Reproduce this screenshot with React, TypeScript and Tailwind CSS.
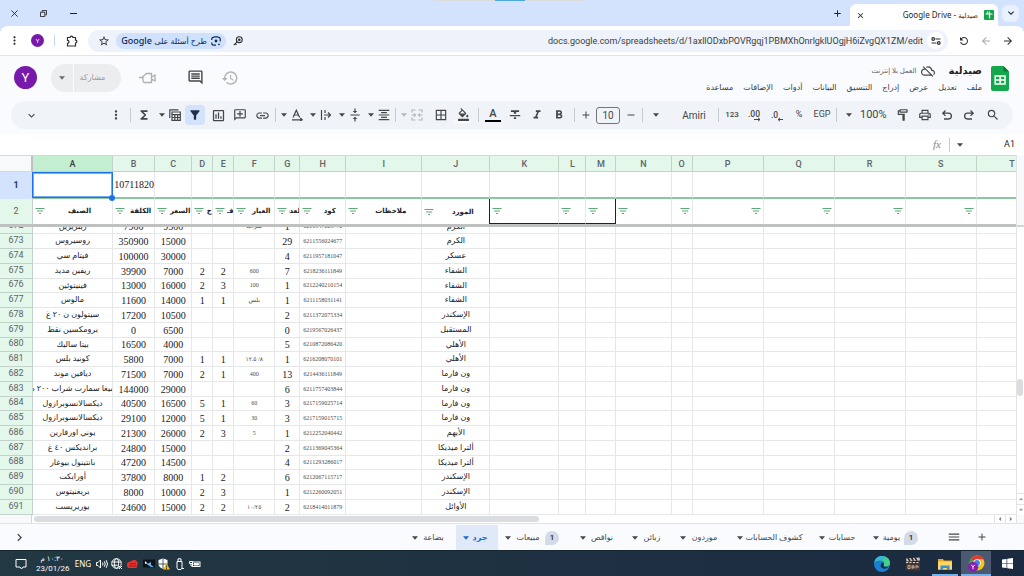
import type { ReactNode } from 'react';
import {
  MdAdd, MdArrowBack, MdArrowForward, MdBorderAll, MdChevronRight, MdClose, MdExpandMore, MdFilterAlt, MdFilterList,
  MdFormatAlignCenter, MdFormatBold, MdFormatColorFill, MdFormatItalic, MdFormatStrikethrough, MdFunctions, MdHistory,
  MdInsertLink, MdMenu, MdMoreVert, MdOutlineAddComment, MdOutlineCloudOff, MdOutlineComment, MdOutlineFormatPaint,
  MdOutlineInsertChart, MdOutlinePrint, MdRefresh, MdRemove, MdSearch, MdStarBorder, MdVerticalAlignCenter,
} from 'react-icons/md';

const UI = "font-['Roboto','DejaVu_Sans',sans-serif]";

/* ---------- small shared pieces ---------- */

function Caret({ className = '' }: { className?: string }) {
  return (
    <svg viewBox="0 0 6 4" className={`h-1 w-[6px] shrink-0 ${className}`} fill="currentColor" aria-hidden="true">
      <path d="M0 0.300h6L3 3.700z" />
    </svg>
  );
}

function IconButton({ label, className = 'w-[22px]', children }: { label: string; className?: string; children: ReactNode }) {
  return (
    <button type="button" aria-label={label} className={`flex h-5 shrink-0 items-center justify-center ${className}`}>
      {children}
    </button>
  );
}

function Divider({ className = 'w-1' }: { className?: string }) {
  return (
    <span className={`flex h-[14px] shrink-0 justify-center ${className}`}>
      <span className="w-px bg-[#c7cacd]" />
    </span>
  );
}

function CaretGroup({ label, children, className = '' }: { label: string; children: ReactNode; className?: string }) {
  return (
    <button type="button" aria-label={label} className={`flex h-5 shrink-0 items-center pl-[3px] ${className}`}>
      <span className="flex w-2 justify-center"><Caret /></span>
      <span className="flex w-[18px] justify-center">{children}</span>
    </button>
  );
}

function SheetsLogo({ className }: { className: string }) {
  return (
    <svg viewBox="0 0 18 25" className={className} aria-hidden="true">
      <path d="M2 0h10.500l5.500 5.500V23a2 2 0 0 1-2 2H2a2 2 0 0 1-2-2V2a2 2 0 0 1 2-2z" fill="#12a84b" />
      <path d="M12.500 0l5.500 5.500h-5.500z" fill="#0b7a36" />
      <path d="M4.200 10h9.800v8H4.200zM4.200 14h9.800M9.100 10v8" fill="none" stroke="#fff" strokeWidth="1.500" />
    </svg>
  );
}

/* ---------- browser window ---------- */

function TabStrip() {
  return (
    <div className="flex h-[26px] items-center bg-[#d3e2fd] text-[#1f1f1f]">
      <IconButton label="إغلاق" className="ml-[3px] w-[22px]">
        <svg viewBox="0 0 8 8" className="size-[7px]" stroke="currentColor"><path d="M.5.5l7 7M7.500.5l-7 7" /></svg>
      </IconButton>
      <IconButton label="استعادة" className="ml-[7px] w-[22px]">
        <svg viewBox="0 0 8 8" className="size-[7px]" stroke="currentColor" fill="none"><path d="M.5 2.500h5v5h-5zM2.500 2V.5h5v5H6" /></svg>
      </IconButton>
      <IconButton label="تصغير" className="ml-2 w-[22px]">
        <span className="h-px w-[7px] bg-[#1f1f1f]" />
      </IconButton>
      <div className="flex h-px flex-1 self-start">
        <div className="ml-auto mr-60 flex w-[152px] justify-center bg-[#dcdcdc]">
          <div className="w-[30px] bg-[#4da6e0]" />
        </div>
      </div>
      <IconButton label="علامة تبويب جديدة" className="mr-0.5 w-[22px]"><MdAdd size={11} /></IconButton>
      <div className="flex h-[22px] w-[148px] items-center self-end rounded-t-md bg-white px-1">
        <button type="button" aria-label="إغلاق علامة التبويب" className="flex w-3 justify-center"><MdClose size={9} /></button>
        <span className="flex-1 pr-[6px] text-right font-['Noto_Sans','DejaVu_Sans',sans-serif] text-[8px] leading-4">
          Google Drive - <span className="font-['DejaVu_Sans',sans-serif] text-[7px]">صيدلية</span>
        </span>
        <svg viewBox="0 0 10 10" className="size-[10px]" aria-hidden="true">
          <rect width="10" height="10" rx="1" fill="#12a34a" />
          <path d="M1.500 4h7M5.500 1.500v7M3.500 4V1.500" stroke="#fff" strokeWidth="1.200" fill="none" />
        </svg>
      </div>
      <button type="button" aria-label="البحث في علامات التبويب" className="ml-1 mr-[5px] flex size-[17px] items-center justify-center rounded-md bg-[#e9f0fe]">
        <MdExpandMore size={12} />
      </button>
    </div>
  );
}

function AddressRow() {
  return (
    <div className="bg-[#d3e2fd]">
      <div className="flex h-[30px] items-center rounded-t-lg border-b border-[#e3e5e8] bg-white text-[#2d2f31]">
        <IconButton label="المزيد" className="ml-[3px] w-[22px]"><MdMoreVert size={13} /></IconButton>
        <button type="button" aria-label="الملف الشخصي" className={`ml-[6px] flex size-[13px] items-center justify-center rounded-full bg-[#7719aa] text-[6px] text-white ${UI}`}>Y</button>
        <span className="ml-[10px] h-[11px] w-px bg-[#c6dafc]" />
        <IconButton label="الإضافات" className="ml-[6px] w-[22px]">
          <svg viewBox="0 0 12 12" className="size-3" fill="none" stroke="currentColor" strokeWidth="1.200">
            <path d="M1.500 2.500h2.600a1.400 1.400 0 0 1 2.800 0h2.600v2.700a1.400 1.400 0 0 1 0 2.800v3h-8V8.300a1.500 1.500 0 0 0 0-3z" />
          </svg>
        </IconButton>
        <div className="mx-[5px] flex h-[22px] flex-1 items-center rounded-full bg-[#edf2fb] pr-[2px]">
          <IconButton label="إضافة إشارة" className="ml-1 w-6"><MdStarBorder size={12} /></IconButton>
          <button type="button" className="flex h-4 w-[110px] items-center justify-center gap-1 rounded-full bg-[#d0e1fd] font-['Noto_Sans','DejaVu_Sans',sans-serif] text-[9px] font-medium text-[#0b2a57]" dir="rtl">
            <svg viewBox="0 0 10 10" className="size-[10px]" fill="none" stroke="currentColor" strokeWidth="1.200" aria-hidden="true">
              <path d="M.8 6.500v1a1.700 1.700 0 0 0 1.700 1.700H5M.8 4V3A1.700 1.700 0 0 1 2.500 1.300l.8-.5h3.400l.8.5A1.700 1.700 0 0 1 9.200 3v2.500" />
              <circle cx="5" cy="5" r="1.400" fill="currentColor" stroke="none" /><circle cx="8" cy="8.300" r=".9" fill="currentColor" stroke="none" />
            </svg>
            <span className="whitespace-nowrap"><span className="text-[8px]">طرح أسئلة على</span> Google</span>
          </button>
          <IconButton label="كلمات المرور" className="w-6">
            <svg viewBox="0 0 10 10" className="size-[10px]" fill="none" stroke="currentColor" strokeWidth="1.100">
              <circle cx="6.300" cy="3.700" r="2.900" /><circle cx="6.300" cy="3.700" r=".7" fill="currentColor" /><path d="M4.200 5.800L.8 9.200M2.200 7.700l1.300 1.200" />
            </svg>
          </IconButton>
          <input
            dir="ltr"
            aria-label="شريط العناوين"
            className="h-5 min-w-0 flex-1 bg-transparent pr-1 text-right font-['Roboto',sans-serif] text-[9px] text-[#3c4043] outline-none"
            defaultValue="docs.google.com/spreadsheets/d/1axllODxbPOVRgqj1PBMXhOnrlgklUOgjH6iZvgQX1ZM/edit"
          />
          <button type="button" aria-label="معلومات الموقع" className="mr-[2px] flex size-[17px] items-center justify-center rounded-full bg-white">
            <svg viewBox="0 0 10 8" className="h-2 w-[10px]" fill="none" stroke="currentColor" strokeWidth="1.200" aria-hidden="true">
              <path d="M4.500 2H9.500M.5 6H5.500" /><circle cx="2.200" cy="2" r="1.300" /><circle cx="7.800" cy="6" r="1.300" />
            </svg>
          </button>
        </div>
        <IconButton label="إعادة التحميل"><MdRefresh size={12} className="-scale-x-100" /></IconButton>
        <IconButton label="للأمام" className="w-[22px] text-[#a3a7ab]"><MdArrowBack size={12} /></IconButton>
        <IconButton label="للخلف" className="mr-[5px] w-[22px]"><MdArrowForward size={12} /></IconButton>
      </div>
    </div>
  );
}

/* ---------- document header ---------- */

const MENUS = ['ملف', 'تعديل', 'عرض', 'إدراج', 'التنسيق', 'البيانات', 'أدوات', 'الإضافات', 'مساعدة'];

function DocHeader() {
  return (
    <header className={`flex h-[45px] items-center justify-between bg-[#fafbff] ${UI}`}>
      <div className="flex items-center pb-[2px] pl-[14px]">
        <button type="button" aria-label="حساب Google" className="flex size-[23px] items-center justify-center rounded-full bg-[#7719aa] text-[13px] text-white">Y</button>
        <div className="ml-[14px] flex h-7 w-[70px] items-center rounded-full bg-[#ecedee] text-[8px] text-[#9a9c9e]">
          <button type="button" aria-label="خيارات المشاركة" className="flex h-full w-[23px] items-center justify-center border-r border-[#fafbff] text-[#6b6d6f]"><Caret /></button>
          <button type="button" className="flex-1 pr-[10px] text-center">مشاركة</button>
        </div>
        <IconButton label="الانضمام إلى مكالمة" className="ml-[11px] w-[30px] text-[#adb0b3]">
          <svg viewBox="0 0 18 14" className="h-[14px] w-[18px]" fill="none" stroke="currentColor" strokeWidth="1.300">
            <path d="M1 6.500h4M8.500 2.500h5v9h-7A1.500 1.500 0 0 1 5 10V5.500zM17 4v6l-3.500-2V6z" />
          </svg>
        </IconButton>
        <IconButton label="التعليقات" className="ml-[18px] w-[30px] text-[#444647]"><MdOutlineComment size={17} /></IconButton>
        <IconButton label="سجل الإصدارات" className="ml-[5px] w-[30px] text-[#b0b3b6]"><MdHistory size={18} /></IconButton>
      </div>
      <div className="flex items-center gap-2 pr-[15px]">
        <div className="flex flex-col pt-px" dir="rtl">
          <div className="flex h-[18px] items-center pr-px">
            <h1 className="text-[10px] font-bold leading-4 text-[#1f1f1f]">صيدلية</h1>
            <MdOutlineCloudOff size={14} className="mr-[14px] text-[#444746]" />
            <span className="mr-1 text-[7px] text-[#5f6368]">العمل بلا إنترنت</span>
          </div>
          <nav className="flex h-4 items-center gap-[10px] pr-px text-[8px] text-[#3c4043]">
            {MENUS.map((m) => <button type="button" key={m}>{m}</button>)}
          </nav>
        </div>
        <SheetsLogo className="h-[25px] w-[18px]" />
      </div>
    </header>
  );
}

function Toolbar() {
  return (
    <div className="bg-[#fafbff] pb-[5px]">
      <div className={`mx-[11px] flex h-7 items-center rounded-full bg-[#f0f4f9] pl-[9px] pr-[7px] text-[#444746] ${UI}`}>
        <IconButton label="إخفاء القوائم"><MdExpandMore size={13} /></IconButton>
        <span className="flex-1" />
        <IconButton label="المزيد"><MdMoreVert size={14} /></IconButton>
        <Divider className="w-[6px]" />
        <IconButton label="الدوال"><MdFunctions size={14} /></IconButton>
        <CaretGroup label="طرق عرض الجدول">
          <svg viewBox="0 0 12 12" className="size-3" fill="none" stroke="currentColor" strokeWidth="1.200">
            <path d="M.8 9V.8H9.500M3 3h8.300v8.300H3zM3 5.600h8.300M3 8.500h8.300M5.800 5.600v5.700M8.600 5.600v5.700" />
          </svg>
        </CaretGroup>
        <IconButton label="فلتر" className="ml-px mr-[2px] w-5 rounded-sm bg-[#d3e3fd] text-[#1f2f4a]"><MdFilterAlt size={14} /></IconButton>
        <IconButton label="رسم بياني"><MdOutlineInsertChart size={15} /></IconButton>
        <IconButton label="تعليق"><MdOutlineAddComment size={14} className="-scale-x-100" /></IconButton>
        <IconButton label="رابط"><MdInsertLink size={15} /></IconButton>
        <Divider />
        <CaretGroup label="تدوير النص">
          <svg viewBox="0 0 12 12" className="size-3" fill="none" stroke="currentColor" strokeWidth="1.200">
            <path d="M2 8.500L5.300 1.200 8.600 8.500M3.200 6h4.200M1 10.800h10M9.300 9l1.800 1.800L9.300 12" />
          </svg>
        </CaretGroup>
        <CaretGroup label="التفاف النص">
          <svg viewBox="0 0 12 12" className="size-3" fill="none" stroke="currentColor" strokeWidth="1.200">
            <path d="M1.500 1v10M5 1v3M5 8v3M4 6h6.500M8 3.500L10.500 6 8 8.500" />
          </svg>
        </CaretGroup>
        <CaretGroup label="محاذاة عمودية"><MdVerticalAlignCenter size={14} /></CaretGroup>
        <CaretGroup label="محاذاة أفقية"><MdFormatAlignCenter size={14} /></CaretGroup>
        <Divider />
        <CaretGroup label="دمج الخلايا" className="text-[#b4b7ba]">
          <svg viewBox="0 0 12 12" className="size-3" fill="none" stroke="currentColor" strokeWidth="1.200">
            <path d="M4.500 1H1v2.500M7.500 1H11v2.500M4.500 11H1V8.500M7.500 11H11V8.500M.5 6H4.500M3 4.500L4.500 6 3 7.500M11.500 6H7.500M9 4.500L7.500 6 9 7.500" />
          </svg>
        </CaretGroup>
        <IconButton label="الحدود" className="ml-1 w-[22px]"><MdBorderAll size={14} /></IconButton>
        <IconButton label="لون التعبئة" className="w-[22px] flex-col"><MdFormatColorFill size={13} /><span className="h-[2px] w-4 bg-white" /></IconButton>
        <Divider className="w-2" />
        <IconButton label="لون النص" className="w-[22px] flex-col">
          <span className="text-[11px] font-medium leading-3">A</span><span className="h-[2px] w-4 bg-black" />
        </IconButton>
        <IconButton label="يتوسطه خط"><MdFormatStrikethrough size={14} /></IconButton>
        <IconButton label="مائل"><MdFormatItalic size={14} /></IconButton>
        <IconButton label="غامق"><MdFormatBold size={14} /></IconButton>
        <Divider className="w-2" />
        <IconButton label="تكبير الخط" className="w-4"><MdAdd size={12} /></IconButton>
        <input aria-label="حجم الخط" defaultValue="10" className="mx-[2px] h-[17px] w-6 rounded-[3px] border border-[#747775] bg-transparent text-center text-[10px]" />
        <IconButton label="تصغير الخط" className="w-[18px]"><MdRemove size={12} /></IconButton>
        <Divider />
        <IconButton label="قائمة الخطوط" className="w-6"><Caret /></IconButton>
        <button type="button" className="w-12 pl-1 text-center text-[10px]">Amiri</button>
        <Divider />
        <button type="button" className="w-6 text-center text-[8px] font-medium">123</button>
        <IconButton label="زيادة المنازل العشرية">
          <svg viewBox="0 0 14 13" className="h-[13px] w-[14px]" fill="currentColor">
            <text x="0" y="7.500" fontSize="8.500" fontWeight="500" fontFamily="Roboto">.00</text>
            <path d="M6 10.500h6M10 8.800l2 1.700-2 1.700" fill="none" stroke="currentColor" />
          </svg>
        </IconButton>
        <IconButton label="تقليل المنازل العشرية">
          <svg viewBox="0 0 14 13" className="h-[13px] w-[14px]" fill="currentColor">
            <text x="1" y="8.500" fontSize="8.500" fontWeight="500" fontFamily="Roboto">.0</text>
            <path d="M13 10.500H8M10 8.800l-2 1.700 2 1.700" fill="none" stroke="currentColor" />
          </svg>
        </IconButton>
        <button type="button" className="w-[22px] text-center text-[9px]">%</button>
        <button type="button" className="w-6 text-center text-[9px]">EGP</button>
        <Divider />
        <IconButton label="قائمة التكبير"><Caret /></IconButton>
        <button type="button" className="w-8 text-left text-[11px]">100%</button>
        <IconButton label="نسخ التنسيق"><MdOutlineFormatPaint size={14} className="-scale-x-100" /></IconButton>
        <IconButton label="طباعة"><MdOutlinePrint size={14} /></IconButton>
        <IconButton label="إعادة">
          <svg viewBox="0 0 12 12" className="size-3" fill="none" stroke="currentColor" strokeWidth="1.300"><path d="M4.500 1.500L1.800 4.200l2.700 2.700M1.800 4.200h5.700a2.900 2.900 0 0 1 0 5.800H3" /></svg>
        </IconButton>
        <IconButton label="تراجع">
          <svg viewBox="0 0 12 12" className="size-3" fill="none" stroke="currentColor" strokeWidth="1.300"><path d="M7.500 1.500l2.700 2.700-2.700 2.700M10.200 4.200H4.500a2.900 2.900 0 0 0 0 5.800H9" /></svg>
        </IconButton>
        <IconButton label="بحث" className="w-[26px]"><MdSearch size={14} /></IconButton>
      </div>
    </div>
  );
}

function FormulaBar() {
  return (
    <div className={`flex h-[21px] items-center bg-white text-[#444746] ${UI}`}>
      <input aria-label="شريط الصيغة" className="h-4 min-w-0 flex-1 outline-none" />
      <span className="w-5 text-center font-['Liberation_Serif',serif] text-[11px] italic text-[#80868b]">fx</span>
      <Divider />
      <IconButton label="النطاقات المسماة" className="w-[18px]"><Caret /></IconButton>
      <input aria-label="مربع الاسم" defaultValue="A1" className="w-[55px] pr-[9px] text-right text-[9px] text-[#1f1f1f] outline-none" />
    </div>
  );
}

/* ---------- grid ---------- */

const COLS: { id: string; w: string; label?: string; flip?: boolean; none?: boolean }[] = [
  { id: 'A', w: 'w-20', label: 'الصنف' },
  { id: 'B', w: 'w-[42px]', label: 'الكلفة' },
  { id: 'C', w: 'w-[37px]', label: 'السعر' },
  { id: 'D', w: 'w-[21px]', label: 'خ' },
  { id: 'E', w: 'w-[21px]', label: 'فـ' },
  { id: 'F', w: 'w-[41px]', label: 'العيار' },
  { id: 'G', w: 'w-[25px]', label: 'العدد' },
  { id: 'H', w: 'w-[46px]', label: 'كود' },
  { id: 'I', w: 'w-[76px]', label: 'ملاحظات' },
  { id: 'J', w: 'w-[68px]', label: 'المورد' },
  { id: 'K', w: 'w-[69px]' },
  { id: 'L', w: 'w-[27px]' },
  { id: 'M', w: 'w-[30px]' },
  { id: 'N', w: 'w-[55px]' },
  { id: 'O', w: 'w-[21px]', flip: true },
  { id: 'P', w: 'w-[71px]', flip: true },
  { id: 'Q', w: 'w-[71px]', flip: true },
  { id: 'R', w: 'w-[71px]', flip: true },
  { id: 'S', w: 'w-[71px]', flip: true },
  { id: 'T', w: 'w-[71px]', none: true },
];

/* row number, then the values of columns A to J */
const ROWS: string[][] = [
  ['673', 'روسيروس', '350900', '15000', '', '', '', '29', '6211556024677', '', 'الكرم'],
  ['674', 'فيتام سي', '100000', '30000', '', '', '', '4', '6211957181047', '', 'عسكر'],
  ['675', 'ريفين مديد', '39900', '7000', '2', '2', '600', '7', '6218236111849', '', 'الشفاء'],
  ['676', 'فينيتوئين', '13000', '16000', '2', '3', '100', '1', '6212240210154', '', 'الشفاء'],
  ['677', 'مالوس', '11600', '14000', '1', '1', 'بلس', '1', '6211158031141', '', 'الشفاء'],
  ['678', 'سيتولون ن ٢٠ غ', '17200', '10500', '', '', '', '2', '6211372075334', '', 'الإسكندر'],
  ['679', 'برومكسين نقط', '0', '6500', '', '', '', '0', '6219567026437', '', 'المستقبل'],
  ['680', 'بيتا ساليك', '16500', '4000', '', '', '', '5', '6210872086420', '', 'الأهلي'],
  ['681', 'كونيد بلس', '5800', '7000', '1', '1', '٨/ ١٢.٥', '1', '6216208070101', '', 'الأهلي'],
  ['682', 'ديافين موند', '71500', '7000', '2', '1', '400', '13', '6214436111849', '', 'ون فارما'],
  ['683', 'أوميغا سمارت شراب ٢٠٠ مل', '144000', '29000', '', '', '', '6', '6211757403844', '', 'ون فارما'],
  ['684', 'ديكسالانسوبرازول', '40500', '16500', '5', '1', '60', '3', '6217159025714', '', 'ون فارما'],
  ['685', 'ديكسالانسوبرازول', '29100', '12000', '5', '1', '30', '3', '6217159015715', '', 'ون فارما'],
  ['686', 'يوني اورفارين', '21300', '26000', '2', '3', '5', '1', '6212252040442', '', 'الأيهم'],
  ['687', 'برانديكس ٤٠ غ', '24800', '15000', '', '', '', '2', '6211369045364', '', 'ألترا ميديكا'],
  ['688', 'بانتينول بيوغار', '47200', '14500', '', '', '', '4', '6211293286017', '', 'ألترا ميديكا'],
  ['689', 'أورابكت', '37800', '8000', '1', '2', '', '6', '6212067115717', '', 'الإسكندر'],
  ['690', 'بريغنيتوس', '8000', '10000', '2', '3', '', '1', '6212260092051', '', 'الإسكندر'],
  ['691', 'يوريريست', '24600', '15000', '2', '2', '١٠/٢٥', '2', '6218414011879', '', 'الأوائل'],
];
const CUT_ROW = ['672', 'ريتريزين', '7900', '9500', '', '', 'شراب', '1', '6211547025772', '', 'الكرم'];

function cellText(col: number) {
  if (col === 5 || col === 7) return 'text-[6px] text-[#4a4d50]';
  if (col === 0 || col === 9) return 'text-[8px]';
  return 'text-[10px]';
}

function Cell({ col, value }: { col: number; value: string }) {
  return (
    <div className="flex h-[13px] items-center justify-center overflow-hidden whitespace-nowrap" dir={col === 5 ? 'ltr' : 'auto'}>
      <span className={cellText(col)}>{value}</span>
    </div>
  );
}

function FilterButton({ col }: { col: string }) {
  return (
    <button type="button" aria-label={`فلتر ${col}`} className="flex w-[14px] shrink-0 justify-center text-[#5fa778]">
      <MdFilterList size={12} />
    </button>
  );
}

function rowTwoBorder(id: string) {
  if (id === 'J') return 'border-r border-[#202124]';
  if (id === 'K' || id === 'L') return 'border-r border-b border-b-[#202124] border-r-[#e6e7e8]';
  if (id === 'M') return 'border-r border-b border-[#202124]';
  return 'border-r border-b border-b-white border-r-[#e6e7e8]';
}

function Grid() {
  return (
    <div className="flex">
      <div className="min-w-0 flex-1 overflow-hidden border-t border-[#d5d8da]">
        <table className="w-[1048px] table-fixed border-separate border-spacing-0 text-[#202124] font-['Liberation_Serif','DejaVu_Sans',serif]">
          <colgroup>
            <col className="w-[33px]" />
            {COLS.map((c) => <col key={c.id} className={c.w} />)}
          </colgroup>
          <thead className="text-[9px] leading-3 text-[#5f6368] font-['Roboto','DejaVu_Sans',sans-serif]">
            <tr className="h-4">
              <th className="border-b border-r-2 border-b-[#d5d8da] border-r-[#bfc1c1] bg-[#f8f9fa] p-0" />
              {COLS.map((c) => (
                <th key={c.id} scope="col" className={`border-b border-r border-[#c4d3c9] p-0 font-medium ${c.id === 'A' ? 'bg-[#c3eecf] text-[#3c4043]' : 'bg-[#e4f7eb]'}`}>{c.id}</th>
              ))}
            </tr>
          </thead>
          <tbody>
            <tr className="h-[27px]">
              <th scope="row" className="border-r border-[#c4d3c9] bg-[#d3e3fd] p-0 text-[9px] font-bold text-[#1f3a68] font-['Roboto',sans-serif]">1</th>
              {COLS.map((c) => (
                <td key={c.id} className="relative border-b-2 border-r border-b-[#8cc79f] border-r-[#e6e7e8] p-0 text-center text-[10px]">
                  {c.id === 'A' && (
                    <>
                      <span className="absolute -bottom-px -left-px -right-px top-0 border border-[#1a73e8] ring-1 ring-inset ring-[#1a73e8]/60" />
                      <span className="absolute -bottom-[4px] -right-[3px] z-10 size-[6px] rounded-full bg-[#1a73e8]" />
                    </>
                  )}
                  {c.id === 'B' && <div className="pl-px leading-3">10711820</div>}
                </td>
              ))}
            </tr>
            <tr className="h-[25px]">
              <th scope="row" className="border-r border-[#c4d3c9] bg-[#e4f7eb] p-0 text-[9px] font-normal text-[#5f6368] font-['Roboto',sans-serif]">2</th>
              {COLS.map((c) => (
                <td key={c.id} className={`p-0 ${rowTwoBorder(c.id)}`}>
                  <div className="flex h-6 items-center overflow-hidden">
                    {!c.none && !c.flip && <FilterButton col={c.id} />}
                    <span className="flex min-w-0 flex-1 justify-center overflow-hidden whitespace-nowrap text-[7px] font-bold leading-4" dir="rtl">{c.label}</span>
                    {c.flip && <FilterButton col={c.id} />}
                  </div>
                </td>
              ))}
            </tr>
            <tr className="h-[3px]"><td colSpan={21} className="bg-[#bfc1c1] p-0" /></tr>
            <tr className="h-[7px]">
              {CUT_ROW.map((v, i) => i === 0 ? (
                <th key={i} scope="row" className="border-b border-r border-[#c4d3c9] bg-[#e4f7eb] p-0 font-normal">
                  <div className="flex h-[6px] items-end justify-center overflow-hidden pb-[3px] text-[9px] leading-[9px] text-[#5f6368] font-['Roboto',sans-serif]">{v}</div>
                </th>
              ) : (
                <td key={i} className="border-b border-r border-[#e6e7e8] p-0">
                  <div className="flex h-[6px] items-end overflow-hidden"><div className="w-full"><Cell col={i - 1} value={v} /></div></div>
                </td>
              ))}
              {COLS.slice(10).map((c) => <td key={c.id} className="border-b border-r border-[#e6e7e8] p-0" />)}
            </tr>
            {ROWS.map((r, n) => (
              <tr key={r[0]} className={n % 4 === 3 ? 'h-[14px]' : 'h-[15px]'}>
                <th scope="row" className="border-b border-r border-[#c4d3c9] bg-[#e4f7eb] p-0 pb-[2px] text-[9px] font-normal leading-[11px] text-[#5f6368] font-['Roboto',sans-serif]">{r[0]}</th>
                {r.slice(1).map((v, i) => (
                  <td key={i} className="border-b border-r border-[#e6e7e8] p-0"><Cell col={i} value={v} /></td>
                ))}
                {COLS.slice(10).map((c) => <td key={c.id} className="border-b border-r border-[#e6e7e8] p-0" />)}
              </tr>
            ))}
          </tbody>
        </table>
      </div>
      <div className="flex w-2 flex-col border-l border-[#e1e3e5] bg-white">
        <div className="h-[72px] border-b-2 border-[#d0d4da] bg-[#f8f9fa]" />
        <div className="mt-[152px] h-[17px] w-[6px] rounded-full bg-[#dadce0]" />
        <div className="mt-auto flex h-[11px] items-center justify-center border-t border-[#e1e3e5]"><Caret className="rotate-180 scale-75 text-[#9aa0a6]" /></div>
        <div className="flex h-[11px] items-center justify-center border-t border-[#e1e3e5]"><Caret className="scale-75 text-[#9aa0a6]" /></div>
      </div>
    </div>
  );
}

function HorizontalScroll() {
  return (
    <div className="flex h-[9px] items-center border-b border-[#e1e3e5] bg-white">
      <div className="h-full w-8 border-r border-[#d5d8da] bg-[#f8f9fa]" />
      <div className="flex h-full flex-1 items-center pl-[2px]">
        <div className="h-[6px] w-[505px] rounded-full bg-[#dadce0]" />
      </div>
      <div className="flex h-full w-[11px] items-center justify-center border-l border-[#e1e3e5]"><Caret className="rotate-90 scale-75 text-[#80868b]" /></div>
      <div className="flex h-full w-[11px] items-center justify-center border-l border-[#e1e3e5]"><Caret className="-rotate-90 scale-75 text-[#80868b]" /></div>
      <div className="h-full w-2 border-l border-[#e1e3e5] bg-[#f8f9fa]" />
    </div>
  );
}

/* ---------- sheet tabs ---------- */

const SHEETS = [
  { name: 'بضاعة', w: 'w-[51px]' },
  { name: 'جرد', w: 'w-[42px]', active: true },
  { name: 'مبيعات', w: 'w-[75px]', badge: true },
  { name: 'نواقص', w: 'w-[52px]' },
  { name: 'زبائن', w: 'w-[48px]' },
  { name: 'موردون', w: 'w-[57px]' },
  { name: 'كشوف الحسابات', w: 'w-[82px]' },
  { name: 'حسابات', w: 'w-[54px]' },
  { name: 'يومية', w: 'w-[66px]', badge: true },
];

function SheetTabs() {
  return (
    <nav className={`flex h-[26px] items-center bg-[#f9fbff] text-[#444746] ${UI}`}>
      <IconButton label="تمرير" className="ml-2 w-[22px]"><MdChevronRight size={15} /></IconButton>
      <span className="flex-1" />
      {SHEETS.map((s) => (
        <button
          type="button"
          key={s.name}
          className={`flex h-[25px] shrink-0 items-center whitespace-nowrap pl-[7px] pt-px text-[8px] ${s.w} ${s.badge ? 'pr-[14px]' : 'pr-[7px]'} ${s.active ? 'bg-[#e0e9f8] font-bold text-[#1967d2]' : ''}`}
        >
          <Caret />
          <span className="flex-1 pt-px text-center">{s.name}</span>
          {s.badge && <span className="flex size-[14px] items-center justify-center rounded-full rounded-bl-none bg-[#d3dbe8] font-medium text-[#1f1f1f]">1</span>}
        </button>
      ))}
      <IconButton label="كل الأوراق" className="ml-2 w-7"><MdMenu size={14} /></IconButton>
      <IconButton label="إضافة ورقة" className="mr-7 w-7"><MdAdd size={12} /></IconButton>
    </nav>
  );
}

/* ---------- task bar ---------- */

function TaskBar() {
  return (
    <footer className="flex h-[26px] items-center border-t border-[#16262f] bg-linear-to-r from-[#223842] to-[#1b2a40] font-['Noto_Sans','DejaVu_Sans',sans-serif] text-white">
      <IconButton label="الإشعارات" className="ml-[10px] w-[22px]">
        <svg viewBox="0 0 12 12" className="size-3" fill="none" stroke="currentColor"><path d="M1 1.500h10v7.500H8L6.500 11 5 9H1z" /></svg>
      </IconButton>
      <button type="button" className="ml-1 w-[32px] text-center font-['Roboto','DejaVu_Sans',sans-serif] text-[8px] leading-[10px]">
        <span className="block text-[7px]" dir="rtl">١٠:٣٠ م</span>
        <span className="block">23/01/26</span>
      </button>
      <button type="button" className="ml-[6px] w-[18px] text-[8px]">ENG</button>
      <IconButton label="الصوت" className="ml-[2px] w-[15px]">
        <svg viewBox="0 0 12 10" className="h-[10px] w-3" fill="none" stroke="currentColor"><path d="M.5 3.500H2L4.500 1v8L2 6.500H.5zM6.500 3.500q1 1.500 0 3M8.300 2.300q2 2.700 0 5.400M10.200 1.200q2.600 3.800 0 7.600" /></svg>
      </IconButton>
      <IconButton label="الشبكة" className="w-4">
        <svg viewBox="0 0 12 12" className="size-3" fill="none" stroke="currentColor"><circle cx="5.500" cy="5.500" r="4.800" /><ellipse cx="5.500" cy="5.500" rx="2.100" ry="4.800" /><path d="M.7 4h9.600M.7 7.200h6M8 8l3 3M11 8l-3 3" /></svg>
      </IconButton>
      <IconButton label="تطبيق" className="w-4">
        <svg viewBox="0 0 12 10" className="h-[10px] w-3"><path d="M0 5q.5-2.500 3.500-2.500Q5 .5 8 1q3 .8 2.800 3.500L9.500 9H1q-1.300-2-1-4z" fill="#e5322d" /><path d="M2.500 4.800h6.500M2 7h7" stroke="#8f1512" strokeWidth=".8" /></svg>
      </IconButton>
      <IconButton label="الرسومات" className="w-[15px]">
        <svg viewBox="0 0 12 10" className="h-[10px] w-3"><rect width="12" height="8" y="0.500" fill="#0c1218" /><path d="M1 3l4 1.500L8 3v3l3 2H8L5 6z" fill="#63b3ed" /><path d="M2 2l2 2-2 1z" fill="#fff" /></svg>
      </IconButton>
      <IconButton label="الأمان" className="w-4">
        <svg viewBox="0 0 12 12" className="size-3"><path d="M5 .5l4.500 1.500v4q0 3-4.500 5Q.5 9 .5 6V2z" fill="#fff" /><path d="M5 1v5H.5M5 6v5M5 6h4.500" stroke="#223842" fill="none" strokeWidth=".8" /><path d="M8.500 5.500l3.500 6H5z" fill="#fbbc04" /><path d="M8.500 7.500v2M8.500 10v1" stroke="#222" strokeWidth=".8" /></svg>
      </IconButton>
      <IconButton label="USB" className="w-[15px]">
        <svg viewBox="0 0 10 12" className="h-3 w-[10px]" fill="none" stroke="currentColor"><path d="M3 .8h3v2.700H3zM2 3.500h5V10L6 11.500H3L2 10zM7 10.500h2" /></svg>
      </IconButton>
      <IconButton label="البطارية" className="w-4">
        <svg viewBox="0 0 12 10" className="h-[10px] w-3" fill="none" stroke="currentColor"><rect x="3.500" y="3" width="7.500" height="4.500" /><path d="M5 4.500h4.500v1.500H5z" fill="currentColor" /><path d="M.5 2.500h3v2h-3zM2 5v2h2" /></svg>
      </IconButton>
      <span className="flex-1" />
      <button type="button" aria-label="Microsoft Edge" className="flex h-full w-[30px] items-center justify-center">
        <svg viewBox="0 0 16 16" className="size-4">
          <circle cx="8" cy="8" r="8" fill="#1b7fd4" />
          <path d="M.3 6.500C1.200 2.700 4.200 0 8 0c4.600 0 8 3.200 8 6.800 0 2.600-2 3.900-4 3.900-1.500 0-2.600-.6-2.600-1.200 0-.5.7-.8.7-2C10.100 6 8.600 4.300 6 4.300 3.200 4.300 1.200 5.200.3 6.500z" fill="#45cf8c" />
          <path d="M.3 6.500C1.200 2.700 4.200 0 8 0c1.500 0 2.500.3 3.500 1L8 4.800C7.400 4.500 6.800 4.300 6 4.300 3.200 4.300 1.200 5.200.3 6.500z" fill="#35b6d8" />
          <path d="M9.300 6.600c.9.900.9 1.900.2 2.800-.3.900 1.300 1.600 3 1.400 1-.1 1.800-.5 2.500-1-1.500 3.500-5.500 3.700-7.400 2C5.700 10 7 7 9.300 6.600z" fill="#1b2d40" />
        </svg>
      </button>
      <button type="button" aria-label="تشغيل الوسائط" className="flex h-full w-8 items-center justify-center">
        <svg viewBox="0 0 16 14" className="h-[14px] w-4">
          <path d="M1 1.500L14.500.5l.5 3L1.500 4.500z" fill="#cfcac4" /><path d="M3 1.300l2 2.800M6.500 1l2 2.800M10 .8l2 2.800" stroke="#222" strokeWidth="1.500" />
          <rect x="1" y="5" width="14" height="8.500" fill="#47352e" /><path d="M1 5.500h14" stroke="#ddd" strokeDasharray="2 1.500" /><path d="M3 8.500h2v3H3zM7 8.500v3M7 9h2v2H7M11 8.500v3M11 9h2v2" stroke="#d6cfca" fill="none" strokeWidth=".8" />
        </svg>
      </button>
      <button type="button" aria-label="مستكشف الملفات" className="mx-[3px] flex h-full w-[26px] items-center justify-center border-b-2 border-[#76b0e8] pt-[2px]">
        <svg viewBox="0 0 14 12" className="h-3 w-[14px]"><path d="M0 1h5l1 1.500h8V12H0z" fill="#e9a820" /><path d="M0 3.500h14V11H0z" fill="#ffd765" /><path d="M2.500 12V7.500h9V12H9V10H5v2z" fill="#3d8fd9" /></svg>
      </button>
      <button type="button" aria-label="Google Chrome" className="flex h-full w-[30px] items-center justify-center border-b-2 border-[#76b0e8] bg-[#4b5a70]">
        <svg viewBox="0 0 18 18" className="size-[18px]">
          <circle cx="10" cy="9" r="7.500" fill="#fbc116" />
          <path d="M10 9L3.500 5.300A7.500 7.500 0 0 1 16.500 5.300H10z" fill="#e33b2e" />
          <path d="M10 9L3.500 5.300A7.500 7.500 0 0 0 10 16.500l3.200-5.600z" fill="#2da94f" />
          <circle cx="10" cy="9" r="3.700" fill="#fff" /><circle cx="10" cy="9" r="2.900" fill="#3f7ff0" />
          <circle cx="6" cy="13" r="5" fill="#8a1cb0" /><path d="M4.300 10.800L6 13v2.300M7.700 10.800L6 13" stroke="#fff" strokeWidth=".9" fill="none" />
        </svg>
      </button>
      <button type="button" aria-label="ابدأ" className="flex h-full w-[33px] items-center justify-center">
        <svg viewBox="0 0 12 12" className="size-[11px]" fill="#fff"><path d="M0 1.700l5-.7v4.700H0zM5.700.9L12 0v5.700H5.700zM0 6.300h5V11l-5-.7zM5.700 6.300H12V12l-6.300-.9z" /></svg>
      </button>
    </footer>
  );
}

export default function App() {
  return (
    <div className="min-h-screen overflow-hidden bg-white">
      <TabStrip />
      <AddressRow />
      <DocHeader />
      <Toolbar />
      <FormulaBar />
      <Grid />
      <HorizontalScroll />
      <SheetTabs />
      <TaskBar />
    </div>
  );
}
